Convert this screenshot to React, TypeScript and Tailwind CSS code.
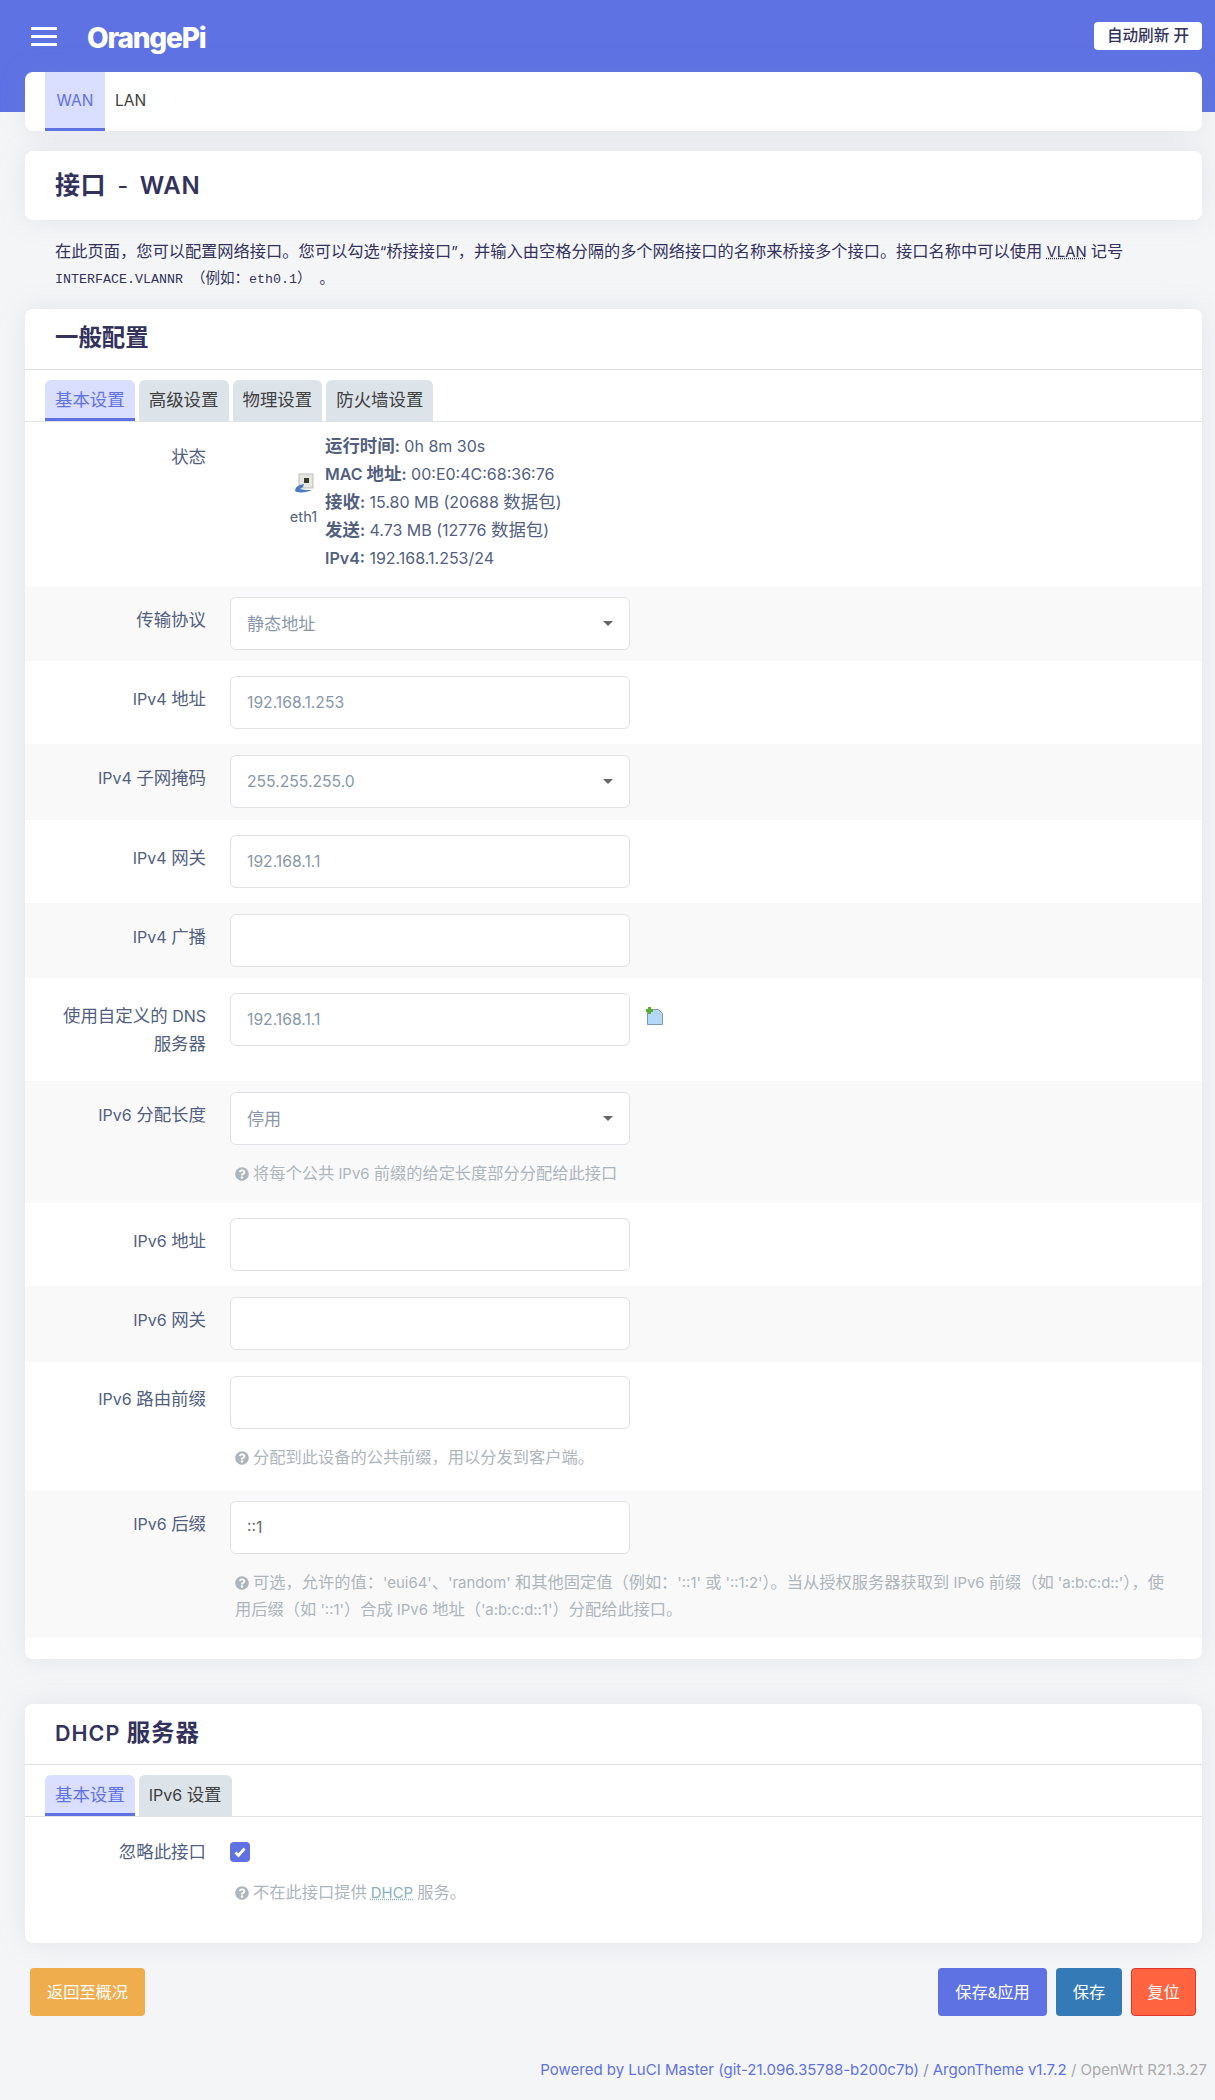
const sans = '"Inter", "Noto Sans CJK SC", sans-serif';
const cardShadow = 'shadow-[0_0_28px_rgba(136,152,170,0.16)]';

// CJK runs are set a bit larger than the latin text around them
function T({ children }: { children: string }) {
  const parts = children.split(/([\u3000-\u303f\u3400-\u9fff\uff00-\uffef]+)/);
  return (
    <>
      {parts.map((p, i) => (i % 2 === 1 ? <span key={i} className="text-[1.09em]">{p}</span> : p))}
    </>
  );
}

function HelpIcon() {
  return (
    <svg viewBox="0 0 512 512" className="mr-[4px] inline-block h-[14px] w-[14px] align-[-2px]" fill="#adb5bd">
      <path d="M504 256c0 137-111 248-248 248S8 393 8 256 119 8 256 8s248 111 248 248zM262.650 90c-54.500 0-89.260 22.960-116.550 63.770-3.540 5.290-2.360 12.420 2.710 16.270l34.700 26.310c5.210 3.950 12.630 3.010 16.680-2.120 17.860-22.660 30.110-35.800 57.300-35.800 20.430 0 45.700 13.150 45.700 32.960 0 14.980-12.370 22.670-32.540 33.980C247.130 238.530 216 254.940 216 296v4c0 6.630 5.370 12 12 12h56c6.630 0 12-5.370 12-12v-1.330c0-28.460 83.190-29.650 83.190-106.670 0-58-60.160-102-116.540-102zM256 338c-25.360 0-46 20.640-46 46 0 25.360 20.640 46 46 46s46-20.640 46-46c0-25.360-20.640-46-46-46z" />
    </svg>
  );
}

function Tabs({ items, active }: { items: string[]; active: number }) {
  return (
    <div className="flex gap-[4px] border-b border-[#dee2e6] px-[20px] pt-[10px]">
      {items.map((t, i) => (
        <div
          key={t}
          className={
            i === active
              ? 'flex h-[41px] items-center rounded-t-[6px] border-b-[3px] border-[#5e72e4] bg-[#dadeff] px-[10px] pt-[2px] text-[#5e72e4]'
              : 'flex h-[41px] items-center rounded-t-[6px] bg-[#dce3e9] px-[10px] text-[#404040]'
          }
        >
          <span><T>{t}</T></span>
        </div>
      ))}
    </div>
  );
}

function Row({
  label,
  odd,
  children,
  help,
  className = '',
}: {
  label: string;
  odd?: boolean;
  children?: React.ReactNode;
  help?: string;
  className?: string;
}) {
  return (
    <div className={`flex ${odd ? 'bg-[#f9f9f9] pt-[11px]' : 'bg-white pt-[15px]'} ${className}`}>
      <div className="mt-[9px] w-[181px] pl-[30px] text-right leading-[28px] text-[#525f7f]"><T>{label}</T></div>
      <div className="ml-[24px] flex-1">
        {children}
        {help && (
          <div className="mt-[15px] pl-[5px] pr-[32px] text-[14.9px] leading-[26px] text-[#adb5bd]">
            <HelpIcon />
            <T>{help}</T>
          </div>
        )}
      </div>
    </div>
  );
}

function TextBox({ value, dark }: { value?: string; dark?: boolean }) {
  return (
    <div className={`flex h-[53px] w-[400px] items-center rounded-[6px] border border-[#dee2e6] bg-white px-[16px] text-[15.7px] ${dark ? 'text-[#666]' : 'text-[#8898aa]'}`}>
      {value}
    </div>
  );
}

function SelectBox({ value }: { value: string }) {
  return (
    <div className="flex h-[53px] w-[400px] items-center justify-between rounded-[6px] border border-[#dee2e6] bg-white px-[16px] text-[15.7px] text-[#8898aa]">
      <span><T>{value}</T></span>
      <span className="h-0 w-0 border-x-[5px] border-t-[5px] border-x-transparent border-t-[#666]" />
    </div>
  );
}

function PortIcon() {
  return (
    <svg viewBox="0 0 20 20" className="h-[20px] w-[20px]">
      <rect x="5" y="1" width="14" height="14" fill="#e6e6e2" stroke="#b0b0ac" strokeWidth="0.8" />
      <rect x="10" y="5" width="5" height="5" fill="#3a3a30" />
      <path d="M1 18c0-3 2-5 5-6l4-1-1 3-3 2c3 1 8 1 12 1-4 2-11 3-15 2z" fill="#4b7cc0" />
    </svg>
  );
}

function AddIcon() {
  return (
    <svg viewBox="0 0 18 18" className="h-[18px] w-[18px]">
      <path d="M1.500 2.500h11l4 4v11h-15z" fill="#b4d8f7" stroke="#8296ac" strokeWidth="1" />
      <path d="M2 0h3v2h2v3H5v2H2V5H0V2h2z" fill="#58b030" />
    </svg>
  );
}

function Stat({ label, value }: { label: string; value: string }) {
  return (
    <div>
      <b className="font-semibold"><T>{label}</T></b> <T>{value}</T>
    </div>
  );
}

export default function App() {
  return (
    <div className="min-h-[2100px] bg-[#f4f5f7] text-[16px] text-[#525f7f]" style={{ fontFamily: sans }}>
      <div className="flex h-[112px] items-start justify-between bg-[#5e72e4] pl-[31px] pr-[13px]">
        <div className="flex items-start pt-[22px]">
          <div className="mt-[5px] flex w-[26px] flex-col gap-[5px]">
            <span className="h-[3px] bg-white" />
            <span className="h-[3px] bg-white" />
            <span className="h-[3px] bg-white" />
          </div>
          <span className="ml-[30px] text-[28px] font-extrabold leading-[32px] tracking-[-1.2px] text-white">OrangePi</span>
        </div>
        <div className="mt-[22px] flex h-[28px] w-[108px] items-center justify-center rounded-[4px] bg-white text-[15.6px] font-medium text-[#32325d]">
          自动刷新 开
        </div>
      </div>

      <div className="-mt-[40px] pl-[25px] pr-[13px]">
        <div className={`flex h-[59px] rounded-[8px] bg-white pl-[20px] ${cardShadow}`}>
          <div className="flex w-[60px] items-center justify-center border-b-[3px] border-[#5e72e4] bg-[#dadeff] pt-[1px] text-[15.5px] text-[#5e72e4]">WAN</div>
          <div className="flex items-center px-[10px] pb-[2px] text-[15.5px] text-[#404040]">LAN</div>
        </div>

        <div className={`mt-[20px] flex h-[69px] items-center rounded-[8px] bg-white pl-[30px] text-[24px] font-semibold tracking-[0.6px] text-[#32325d] ${cardShadow}`}>
          <span className="text-[25px]">接口</span>
          <span className="mx-[11px] font-normal">-</span>
          <span>WAN</span>
        </div>

        <div className="mt-[18px] h-[52px] px-[30px] text-[14.9px] leading-[26px] text-[#32325d]">
          <T>{'在此页面\uFF0C您可以配置网络接口。您可以勾选“桥接接口”\uFF0C并输入由空格分隔的多个网络接口的名称来桥接多个接口。接口名称中可以使用 '}</T>
          <span className="underline decoration-dotted">VLAN</span> <T>记号</T>
          <br />
          <span className="font-['Liberation_Mono','Noto_Sans_CJK_SC',monospace] text-[13.33px]"><T>{'INTERFACE.VLANNR \uFF08例如\uFF1Aeth0.1\uFF09 。'}</T></span>
        </div>

        <div className={`mt-[19px] rounded-[8px] bg-white pb-[21px] ${cardShadow}`}>
          <div className="flex h-[61px] items-center border-b border-[#dee2e6] pb-[3px] pl-[30px] text-[21.5px] font-semibold text-[#32325d]">
            <span><T>一般配置</T></span>
          </div>
          <Tabs items={['基本设置', '高级设置', '物理设置', '防火墙设置']} active={0} />

          <div className="flex h-[164px] pt-[10px]">
            <div className="mt-[11px] w-[181px] text-right leading-[28px]"><T>状态</T></div>
            <div className="ml-[83px] flex w-[29px] flex-col items-center pt-[41px]">
              <PortIcon />
              <span className="mt-[10px] text-[14.6px] leading-[28px]">eth1</span>
            </div>
            <div className="ml-[7px] leading-[28px]">
              <Stat label="运行时间:" value="0h 8m 30s" />
              <Stat label="MAC 地址:" value="00:E0:4C:68:36:76" />
              <Stat label="接收:" value="15.80 MB (20688 数据包)" />
              <Stat label="发送:" value="4.73 MB (12776 数据包)" />
              <Stat label="IPv4:" value="192.168.1.253/24" />
            </div>
          </div>

          <Row label="传输协议" odd className="h-[75px]"><SelectBox value="静态地址" /></Row>
          <Row label="IPv4 地址" className="h-[83px]"><TextBox value="192.168.1.253" /></Row>
          <Row label="IPv4 子网掩码" odd className="h-[76px]"><SelectBox value="255.255.255.0" /></Row>
          <Row label="IPv4 网关" className="h-[83px]"><TextBox value="192.168.1.1" /></Row>
          <Row label="IPv4 广播" odd className="h-[75px]"><TextBox /></Row>
          <Row label="使用自定义的 DNS 服务器" className="h-[103px]">
            <div className="flex items-start">
              <TextBox value="192.168.1.1" />
              <span className="ml-[16px] mt-[14px]"><AddIcon /></span>
            </div>
          </Row>
          <Row label="IPv6 分配长度" odd className="h-[122px]" help="将每个公共 IPv6 前缀的给定长度部分分配给此接口">
            <SelectBox value="停用" />
          </Row>
          <Row label="IPv6 地址" className="h-[83px]"><TextBox /></Row>
          <Row label="IPv6 网关" odd className="h-[76px]"><TextBox /></Row>
          <Row label="IPv6 路由前缀" className="h-[128px] !pt-[14px]" help={'分配到此设备的公共前缀\uFF0C用以分发到客户端。'}><TextBox /></Row>
          <Row
            label="IPv6 后缀"
            odd
            className="h-[148px]"
            help={"可选\uFF0C允许的值\uFF1A'eui64'、'random' 和其他固定值\uFF08例如\uFF1A'::1' 或 '::1:2'\uFF09。当从授权服务器获取到 IPv6 前缀\uFF08如 'a:b:c:d::'\uFF09\uFF0C使用后缀\uFF08如 '::1'\uFF09合成 IPv6 地址\uFF08'a:b:c:d::1'\uFF09分配给此接口。"}
          >
            <TextBox value="::1" dark />
          </Row>
        </div>

        <div className={`mt-[45px] h-[239px] rounded-[8px] bg-white ${cardShadow}`}>
          <div className="flex h-[61px] items-center border-b border-[#dee2e6] pb-[3px] pl-[30px] text-[21.5px] font-semibold tracking-[1px] text-[#32325d]">
            <span><T>DHCP 服务器</T></span>
          </div>
          <Tabs items={['基本设置', 'IPv6 设置']} active={0} />
          <div className="flex pt-[21px]">
            <div className="w-[181px] text-right leading-[28px]"><T>忽略此接口</T></div>
            <div className="ml-[24px] pt-[4px]">
              <div className="flex h-[20px] w-[20px] items-center justify-center rounded-[4px] bg-[#5e72e4]">
                <svg viewBox="0 0 12 12" className="h-[12px] w-[12px]" fill="none" stroke="white" strokeWidth="2.8">
                  <path d="M1.500 6.500l3 3 6-7" />
                </svg>
              </div>
              <div className="mt-[17px] pl-[5px] text-[14.9px] leading-[26px] text-[#adb5bd]">
                <HelpIcon />
                <T>不在此接口提供 </T>
                <span className="text-[#8ab0bd] underline decoration-dotted">DHCP</span>
                <T> 服务。</T>
              </div>
            </div>
          </div>
        </div>

        <div className="mt-[25px] flex justify-between pl-[5px] pr-[6px] text-[14.9px] text-white">
          <div className="flex h-[48px] w-[115px] items-center justify-center rounded-[4px] bg-[#f0ad4e]"><span><T>返回至概况</T></span></div>
          <div className="flex gap-[9px]">
            <div className="flex h-[48px] w-[109px] items-center justify-center rounded-[4px] bg-[#5e72e4]"><span><T>保存&应用</T></span></div>
            <div className="flex h-[48px] w-[66px] items-center justify-center rounded-[4px] bg-[#337ab7]"><span><T>保存</T></span></div>
            <div className="flex h-[48px] w-[65px] items-center justify-center rounded-[4px] border border-[#e0392c] bg-[#ff6340]"><span><T>复位</T></span></div>
          </div>
        </div>

        <div className="-mr-[5px] mt-[40px] text-right text-[15px] leading-[28px] text-[#5e72e4]">
          Powered by LuCI Master (git-21.096.35788-b200c7b) <span className="text-[#8a8fa8]">/</span> ArgonTheme v1.7.2 <span className="text-[#aaa]">/ OpenWrt R21.3.27</span>
        </div>
      </div>
    </div>
  );
}
